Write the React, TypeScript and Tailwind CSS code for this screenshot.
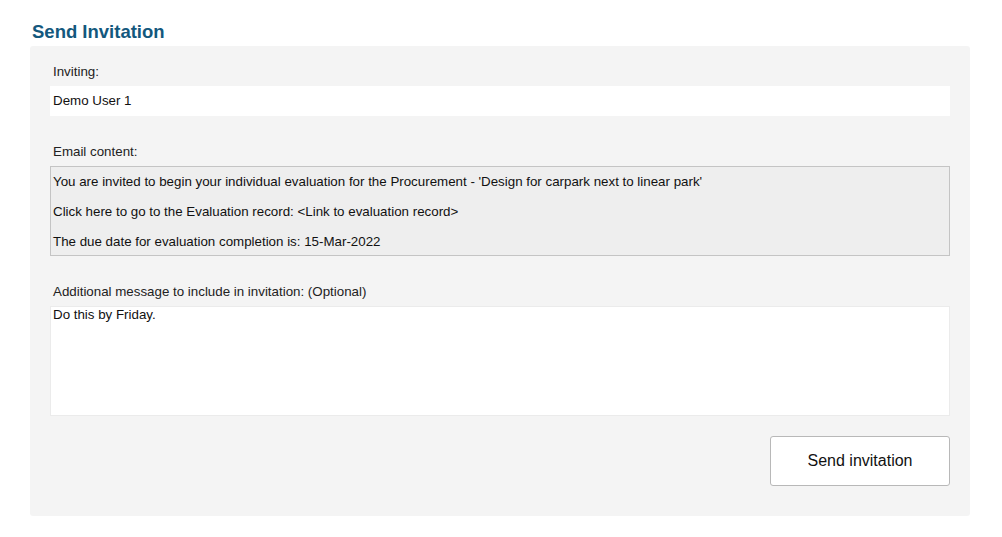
import React from "react";

const Label: React.FC<{ children: React.ReactNode }> = ({ children }) => (
  <p className="text-[13.33px] leading-[15px] text-[#222] px-[3px] mb-[7px]">{children}</p>
);

export default function App() {
  const lines = [
    "You are invited to begin your individual evaluation for the Procurement - 'Design for carpark next to linear park'",
    "Click here to go to the Evaluation record: <Link to evaluation record>",
    "The due date for evaluation completion is: 15-Mar-2022",
  ];

  return (
    <div className="w-[1002px] h-[537px] bg-white font-['Liberation_Sans',Arial,sans-serif]">
      <div className="pt-[21px] pl-[30px] w-[970px]">
        <h1 className="text-[18.5px] leading-[22px] font-bold text-[#13587d] pl-[2px] mb-[3px]">
          Send Invitation
        </h1>
        <div className="bg-[#f4f4f4] rounded-[3px] px-[20px] pt-[18px] pb-[30px]">
          <Label>Inviting:</Label>
          <div className="bg-white h-[30px] flex items-center px-[3px] text-[13.33px] text-[#111]">
            Demo User 1
          </div>

          <div className="mt-[28px]">
            <Label>Email content:</Label>
            <div className="bg-[#eeeeee] border border-[#c4c4c4] h-[90px] flex flex-col px-[2px] pt-[7px] gap-[15px] text-[13.33px] leading-[15px] text-[#111]">
              {lines.map((l) => (
                <p key={l}>{l}</p>
              ))}
            </div>
          </div>

          <div className="mt-[28px]">
            <Label>Additional message to include in invitation: (Optional)</Label>
            <div className="bg-white border border-[#ebebeb] h-[110px] px-[2px] text-[13.33px] leading-[15px] text-[#111]">
              Do this by Friday.
            </div>
          </div>

          <div className="flex justify-end mt-[20px]">
            <button className="w-[180px] h-[50px] bg-white border border-[#b8b8b8] rounded-[3px] text-[16px] text-[#111]">
              Send invitation
            </button>
          </div>
        </div>
      </div>
    </div>
  );
}
